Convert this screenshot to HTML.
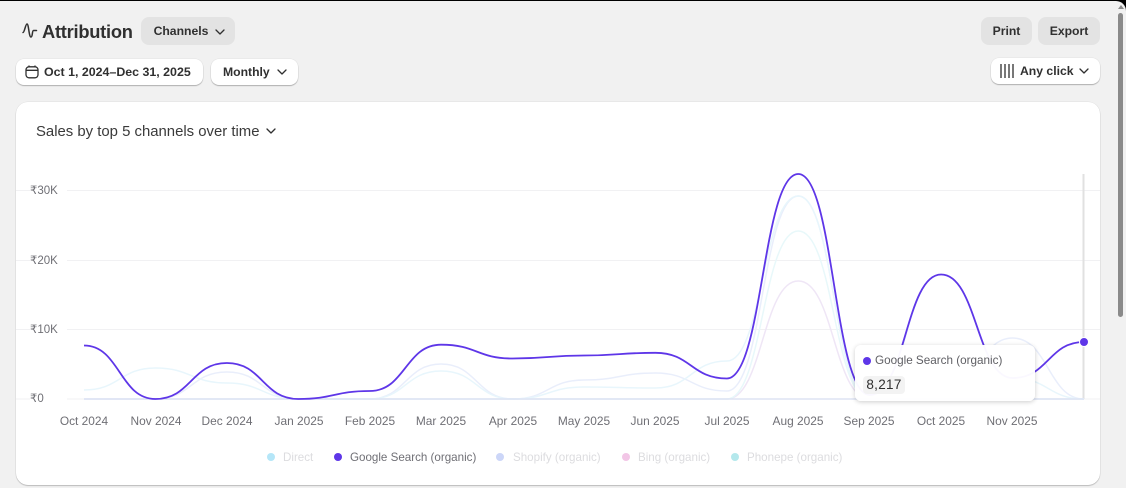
<!DOCTYPE html>
<html><head><meta charset="utf-8">
<style>
html,body{margin:0;padding:0;width:1126px;height:488px;overflow:hidden;background:#000;}
*{box-sizing:border-box;}
#p{position:absolute;left:0;top:1px;width:1126px;height:487px;background:#f1f1f1;border-radius:0 10px 0 0;overflow:hidden;font-family:"Liberation Sans",sans-serif;color:#303030;}
.a{position:absolute;white-space:nowrap;}
.btn{position:absolute;border-radius:8px;font-size:12.2px;font-weight:bold;line-height:28px;height:28px;text-align:center;color:#303030;}
.g{background:#e3e3e3;}
.w{background:#fff;box-shadow:0 1px 1px rgba(0,0,0,.25),0 0 0 .5px rgba(0,0,0,.06);height:26px;line-height:26px;}
svg{position:absolute;overflow:visible;}
.x{position:absolute;top:413px;font-size:11.9px;color:#6f6f75;white-space:nowrap;width:80px;text-align:center;}
.y{position:absolute;left:30px;font-size:11.5px;color:#6f6f75;background:#fff;width:37px;height:14px;line-height:14px;padding-top:1px;}
.l{position:absolute;top:450px;font-size:11.6px;color:#dcdcdf;white-space:nowrap;line-height:14px;}
.d{position:absolute;top:452px;width:8px;height:8px;border-radius:50%;}
</style></head><body>
<div id="p">
<svg style="left:22px;top:21px" width="16" height="18" viewBox="0 0 16 18" fill="none" stroke="#303030" stroke-width="1.5" stroke-linecap="round"><path d="M1 10.5C2.5 10.500 3.500 2 5 2C6.800 2 6.800 15 9 15C10.800 15 10 8.500 11.500 8.500H14.500"/></svg>
<div class="a" style="left:42px;top:20px;font-size:18.3px;font-weight:bold;line-height:22px;letter-spacing:-.25px;">Attribution</div>
<div class="btn g" style="left:141px;top:16px;width:94px;padding-right:14px;">Channels</div>
<svg style="left:214px;top:27px" width="12" height="8" viewBox="0 0 12 8" fill="none" stroke="#303030" stroke-width="1.300" stroke-linecap="round" stroke-linejoin="round"><path d="M2 2L6 6L10 2"/></svg>
<div class="btn g" style="left:981px;top:16px;width:51px;">Print</div>
<div class="btn g" style="left:1038px;top:16px;width:62px;">Export</div>

<div class="btn w" style="left:16px;top:58px;width:187px;text-align:left;padding-left:28px;font-size:12.4px;">Oct 1, 2024–Dec 31, 2025</div>
<svg style="left:25px;top:64px" width="14" height="14" viewBox="0 0 14 14" fill="none" stroke="#303030" stroke-width="1.300"><rect x="1" y="1.800" width="12" height="11" rx="3"/><path d="M1 5.300H13M4 .5V2.500M10 .5V2.500"/></svg>
<div class="btn w" style="left:211px;top:58px;width:87px;text-align:left;padding-left:12px;">Monthly</div>
<svg style="left:276px;top:67px" width="12" height="8" viewBox="0 0 12 8" fill="none" stroke="#303030" stroke-width="1.300" stroke-linecap="round" stroke-linejoin="round"><path d="M2 2L6 6L10 2"/></svg>
<div class="btn w" style="left:991px;top:57px;width:109px;text-align:left;padding-left:29px;">Any click</div>
<svg style="left:1000px;top:63px" width="14" height="14" viewBox="0 0 14 14" fill="none" stroke="#4a4a4a" stroke-width="1.500"><path d="M1 0V14M5 0V14M9 0V14M13 0V14"/></svg>
<svg style="left:1078px;top:66px" width="12" height="8" viewBox="0 0 12 8" fill="none" stroke="#303030" stroke-width="1.300" stroke-linecap="round" stroke-linejoin="round"><path d="M2 2L6 6L10 2"/></svg>

<div class="a" style="left:16px;top:101px;width:1084px;height:383px;background:#fff;border-radius:12px;box-shadow:0 1px 1px rgba(0,0,0,.2),0 0 0 .5px rgba(0,0,0,.07);"></div>
<div class="a" style="left:36px;top:122px;font-size:14.9px;line-height:18px;color:#3a3a3a;">Sales by top 5 channels over time</div>
<svg style="left:265px;top:126px" width="12" height="8" viewBox="0 0 12 8" fill="none" stroke="#303030" stroke-width="1.300" stroke-linecap="round" stroke-linejoin="round"><path d="M2 2L6 6L10 2"/></svg>

<svg style="left:0;top:-1px" width="1126" height="488" fill="none">
<g stroke="#f1f1f3" stroke-width="1">
<path d="M16 190.500H1100M16 260.500H1100M16 329.500H1100M16 399H1100"/>
</g>
</svg>
<div class="y" style="top:182px;">₹30K</div>
<div class="y" style="top:252px;">₹20K</div>
<div class="y" style="top:321px;">₹10K</div>
<div class="y" style="top:390px;">₹0</div>

<svg style="left:0;top:-1px" width="1126" height="488" fill="none" stroke-width="1.500">
<path d="M1083.500 174V399" stroke="#e1e1e1" stroke-width="2"/>
<!-- Bing -->
<path stroke="#efe6f6" d="M84 399H726.900C762.600 399 762.600 281 798.300 281C834 281 834 399 869.700 399H1084"/>
<!-- Phonepe -->
<path stroke="#e8f8fa" d="M84 399H726.900C762.600 399 762.600 231 798.300 231C834 231 834 399 869.700 399H1084"/>
<!-- Shopify -->
<path stroke="#e9eefb" d="M84 399C119.700 399 119.700 399 155.400 399C191.100 399 191.100 372 226.900 372C262.600 372 262.600 399 298.300 399H369.700C405.400 399 405.400 364 441.100 364C476.900 364 476.900 399 512.600 399C548.300 399 548.300 380 584 380C619.700 380 619.700 373 655.400 373C691.100 373 691.100 391 726.900 391C762.600 391 762.600 196 798.300 196C834 196 834 399 869.700 399H941.100C976.900 399 976.900 338 1012.600 338C1048.300 338 1048.300 399 1084 399"/>
<!-- Direct -->
<path stroke="#e8f6fc" d="M84 390C119.700 390 119.700 368 155.400 368C191.100 368 191.100 383 226.900 383C262.600 383 262.600 399 298.300 399H369.700C405.400 399 405.400 371 441.100 371C476.900 371 476.900 399 512.600 399C548.300 399 548.300 387 584 387C619.700 387 619.700 388 655.400 388C691.100 388 691.100 361 726.900 361C762.600 361 762.600 196 798.300 196C834 196 834 399 869.700 399C905.400 399 905.400 274.500 941.100 274.500C976.900 274.500 976.900 378 1012.600 378C1048.300 378 1048.300 399 1084 399"/>
<path d="M84 399H1084" stroke="#dde3f3" stroke-width="1.500"/>
<!-- Google -->
<path stroke="#5e36e8" stroke-width="1.800" d="M84 345.500C119.700 345.500 119.700 399 155.400 399C191.100 399 191.100 363 226.900 363C262.600 363 262.600 399 298.300 399C334 399 334 391 369.700 391C405.400 391 405.400 344.700 441.100 344.700C476.900 344.700 476.900 358.500 512.600 358.500C548.300 358.500 548.300 355.500 584 355.500C619.700 355.500 619.700 352.800 655.400 352.800C691.100 352.800 691.100 378.500 726.900 378.500C762.600 378.500 762.600 174 798.300 174C834 174 834 395 869.700 395C905.400 395 905.400 274.500 941.100 274.500C976.900 274.500 976.900 378 1012.600 378C1048.300 378 1048.300 342 1084 342"/>
<circle cx="1084" cy="342" r="4.500" fill="#5e36e8" stroke="#fff" stroke-width="1"/>
</svg>

<div class="a" style="left:855px;top:344px;width:180px;height:56px;background:rgba(255,255,255,.97);border-radius:6px;box-shadow:0 1px 5px rgba(0,0,0,.2);"></div>
<div class="a" style="left:863px;top:356px;width:8px;height:8px;border-radius:50%;background:#5e36e8;"></div>
<div class="a" style="left:875px;top:353px;font-size:11.7px;line-height:14px;color:#5f5f64;">Google Search (organic)</div>
<div class="a" style="left:863px;top:375px;width:42px;height:18px;background:#f3f3f3;border-radius:4px;font-size:13.500px;line-height:17px;text-align:center;color:#303030;letter-spacing:.3px;">8,217</div>

<div class="x" style="left:44px;">Oct 2024</div>
<div class="x" style="left:116px;">Nov 2024</div>
<div class="x" style="left:187px;">Dec 2024</div>
<div class="x" style="left:259px;">Jan 2025</div>
<div class="x" style="left:330px;">Feb 2025</div>
<div class="x" style="left:401px;">Mar 2025</div>
<div class="x" style="left:473px;">Apr 2025</div>
<div class="x" style="left:544px;">May 2025</div>
<div class="x" style="left:615px;">Jun 2025</div>
<div class="x" style="left:687px;">Jul 2025</div>
<div class="x" style="left:758px;">Aug 2025</div>
<div class="x" style="left:829px;">Sep 2025</div>
<div class="x" style="left:901px;">Oct 2025</div>
<div class="x" style="left:972px;">Nov 2025</div>

<div class="d" style="left:267px;background:#b5e6f8;"></div>
<div class="l" style="left:283px;">Direct</div>
<div class="d" style="left:334px;background:#5e36e8;"></div>
<div class="l" style="left:350px;color:#6f6f75;">Google Search (organic)</div>
<div class="d" style="left:496px;background:#ccd6f8;"></div>
<div class="l" style="left:513px;">Shopify (organic)</div>
<div class="d" style="left:622px;background:#f2c6e6;"></div>
<div class="l" style="left:638px;">Bing (organic)</div>
<div class="d" style="left:731px;background:#b4e8ec;"></div>
<div class="l" style="left:747px;">Phonepe (organic)</div>

<div class="a" style="left:1118px;top:12px;width:5px;height:304px;background:#8a8a8a;border-radius:3px;"></div>
<svg style="left:1117px;top:3px" width="8" height="6"><path d="M1 5L4 1L7 5Z" fill="#8a8a8a"/></svg>
</div>
</body></html>
